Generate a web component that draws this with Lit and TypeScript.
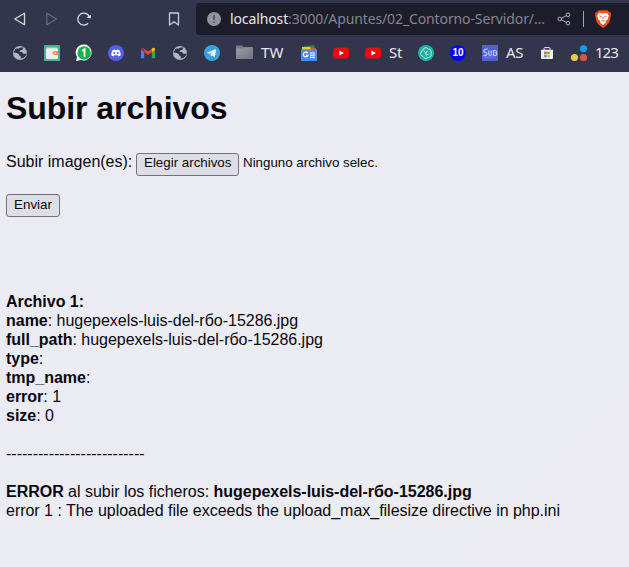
import { LitElement, html, svg, css } from "lit";
import { customElement } from "lit/decorators.js";

const globe = svg`<circle cx="8" cy="8" r="7" fill="#b3b5bf"/><path d="M3.600 3.800 6.600 3.600 8 2.800l3.300-.5-.9 2.400-2.300.8-.4 1.500h2.200l1.500 1.700 2.200.1 1-.6-.6 2.200-2.800 2.600-2.700.6.5-2.200L7 10.200 6.700 8.700 4.300 8.100 1.300 7.600Z" fill="#30334a"/>`;
const youtube = svg`<rect y="2.500" width="16" height="11" rx="3" fill="#f10613"/><path d="m6.300 5.400 4.700 2.600-4.700 2.600Z" fill="#fff"/>`;

const icons: Record<string, unknown> = {
  globe,
  youtube,
  wallet: svg`<rect width="16" height="16" rx="1" fill="#44b78b"/><rect x="2" y="3" width="12" height="11" rx="1.500" fill="#eeecf4"/><path d="M2.500 3h10" stroke="#b8d8d2"/><path d="M14 6h-3.500a2 2 0 0 0 0 4H14Z" fill="#f0974a"/><circle cx="11.200" cy="8" r=".8" fill="#fff"/>`,
  whatsapp: svg`<path d="m0 15.900 1-4A8 8 0 1 1 5 15Z" fill="#f3f6f4"/><circle cx="8.200" cy="7.900" r="6.700" fill="#18b34a"/><path d="m6.200 6 2.300-1.600v7.500" fill="none" stroke="#fff" stroke-width="1.900"/>`,
  discord: svg`<circle cx="8" cy="8" r="8" fill="#5460e6"/><path d="M4.700 5.100 6.700 4.400l.5.800h1.600l.5-.8 2 .7 1.400 3.100v2.100l-2.200 1.100-.8-1.100H6.300l-.8 1.100-2.200-1.100V8.200Z" fill="#fff"/><circle cx="6.300" cy="8.100" r="1" fill="#5460e6"/><circle cx="9.700" cy="8.100" r="1" fill="#5460e6"/>`,
  gmail: svg`<path d="M1 4.500 4.200 6.900V13.300H2a1 1 0 0 1-1-1Z" fill="#4385ee"/><path d="m15 4.500-3.200 2.400v6.400H14a1 1 0 0 0 1-1Z" fill="#33a854"/><path d="M4.200 3.700 8 6.600l3.800-2.900v3.500L8 10.100 4.200 7.200Z" fill="#ea4335"/><path d="M1 4.100c0-1.400 1.500-1.800 2.500-1l.7.600v3.500L1 4.900Z" fill="#c8252f"/><path d="M15 4.100c0-1.400-1.500-1.800-2.500-1l-.7.600v3.500L15 4.900Z" fill="#fbbc04"/>`,
  telegram: svg`<circle cx="8" cy="8" r="8" fill="#36a3dd"/><path d="m2.900 7.800 9.300-3.700-1.400 8.100-2.600-1.900-1.300 1.300-.3-2.400 3.300-3-4.300 2.500Z" fill="#fff"/>`,
  news: svg`<path d="M1.500 1.500 13 0l1 4H2Z" fill="#238843"/><path d="m6 1.200 9 1.800v3H3Z" fill="#ed4934"/><path d="M1 2h8l1 3H1Z" fill="#fac323"/><rect y="4.200" width="16" height="11.800" rx=".8" fill="#4e89eb"/><path d="M6.700 8.100A2.400 2.400 0 1 0 7 10.300H5M9 8h5M9 10.200h5M9 12.400h5" fill="none" stroke="#fff" stroke-width="1.200"/>`,
  chatgpt: svg`<circle cx="8" cy="8" r="8" fill="#18b3a2"/><path d="M4.800 5a3 3 0 0 1 5.400-.9 2.700 2.700 0 0 1 2.700 4 2.900 2.900 0 0 1-3 4.400 3 3 0 0 1-4.900-1 2.800 2.800 0 0 1-2-4.200A2.700 2.700 0 0 1 4.800 5Zm.7.800 2 1.700 2.300-1.300M8 10.200v-2.500m0 2.500 2.500-1" fill="none" stroke="#d8f5ef" stroke-width=".9"/>`,
  ten: svg`<circle cx="8" cy="8" r="8" fill="#0508ef"/><text class="ten" x="8" y="11.200" text-anchor="middle">10</text>`,
  sub: svg`<rect width="16" height="16" fill="#5261d2"/><path d="M5.500 4.200C1.800 3.400.5 6.800 3.200 7.400c3 .7 2 3.600-1.900 3.200M6.800 5.600v3.700c0 1.600 2.500 1.600 2.500 0V5.600M11.500 5.500v5h1.300c2.800 0 2.500-2.600.4-2.600 1.800 0 1.700-2.400-.2-2.400Z" fill="none" stroke="#c2c8f4" stroke-width="1.200"/><path d="M2.500 12.200h11" stroke="#7f8be3" stroke-width=".7"/>`,
  store: svg`<path d="M5 5V3.500C5 2.900 5.400 2.600 6 2.600h4c.6 0 1 .3 1 .9V5" fill="none" stroke="#e9e9ee" stroke-width="1"/><path d="M2 4.700h12V13a1 1 0 0 1-1 1H3a1 1 0 0 1-1-1Z" fill="#eeeef0"/><path d="M5.200 6.700h2.500v2.500H5.200Z" fill="#ec512b"/><path d="M8.300 6.700h2.500v2.500H8.300Z" fill="#73ad16"/><path d="M5.200 9.800h2.500v2.500H5.200Z" fill="#1ba4e7"/><path d="M8.300 9.800h2.500v2.500H8.300Z" fill="#f4b613"/>`,
  dots: svg`<circle cx="12.500" cy="3.700" r="3.600" fill="#0b9be8"/><circle cx="3.500" cy="12.500" r="3.600" fill="#edca45"/><circle cx="12.500" cy="12.500" r="3.600" fill="#e75431"/>`,
  folder: svg`<defs><linearGradient id="fold" x2="1" y2="1"><stop stop-color="#9c9ba8"/><stop offset="1" stop-color="#737280"/></linearGradient></defs><path d="M0 1.500q0-1 1-1h5l1.500 1.500h8.500q1 0 1 1V13q0 1-1 1H1q-1 0-1-1Z" fill="#7b7a87"/><path d="M0 3.500h7l1.500-1H17V13q0 1-1 1H1q-1 0-1-1Z" fill="url(#fold)"/>`,
  back: svg`<path d="M12.500 2.300v11.400L2.800 8Z" fill="none" stroke="#d7d8df" stroke-width="1.300" stroke-linejoin="round"/>`,
  forward: svg`<path d="M2.800 2.300v11.400L12.500 8Z" fill="none" stroke="#686b7d" stroke-width="1.300" stroke-linejoin="round"/>`,
  reload: svg`<path d="M12.200 12.200A6 6 0 1 1 13.300 5.500" fill="none" stroke="#e0e1e7" stroke-width="1.300"/><path d="m10.300 6.600 4.400 1 .3-3.700-1.800.9Z" fill="#e0e1e7"/>`,
  mark: svg`<path d="M3.500 2h9v12L8 10.700 3.500 14Z" fill="none" stroke="#c9cad3" stroke-width="1.300" stroke-linejoin="round"/>`,
  info: svg`<circle cx="8" cy="8" r="7" fill="#9394a0"/><path d="M8 4v5M8 10.400v1.600" stroke="#4e4e5b" stroke-width="1.600"/>`,
  share: svg`<path d="m4 8 7.500-4M4 8l7.500 4" stroke="#b6b7c2"/><g fill="#1d1c2b" stroke="#b6b7c2"><circle cx="3.700" cy="8" r="1.800"/><circle cx="12" cy="3.800" r="1.800"/><circle cx="12" cy="12.200" r="1.800"/></g>`,
  brave: svg`<path d="m3.500.2 9 0 1.500 1.700 1.700.5.2 3-1.500 6.500-2.400 3.100L8 18l-4-3L1.600 11.900.1 5.400l.2-3L2 1.900Z" fill="#f0511f"/><path d="M4.200 2.800 8 3.400l3.800-.6 2 3-1.300 3.800-1.900 1.300.2 1.500L8 14.900l-2.800-2.500.2-1.500-1.900-1.300-1.300-3.800Z" fill="#fff"/><path d="m4.300 6 2.300.7M11.700 6l-2.300.7M8 7v2.300M6.400 10.500 8 11.200l1.600-.7" stroke="#f0511f" fill="none" stroke-width=".9"/>`,
};

const glyph = (name: string, w = 16, h = 16) =>
  html`<svg width=${w} height=${h} viewBox="0 0 ${w} ${h}">${icons[name]}</svg>`;

const bookmarks: [string, string?, string?][] = [
  ["globe"], ["wallet"], ["whatsapp"], ["discord"], ["gmail"], ["globe"], ["telegram"],
  ["folder", "TW", "tw"], ["news"], ["youtube"], ["youtube", "St", "st"], ["chatgpt"],
  ["ten"], ["sub", "AS", "as"], ["store"], ["dots", "123", "num"],
];

@customElement("browser-bar")
class BrowserBar extends LitElement {
  static styles = css`
    :host { display: block; height: 72px; overflow: hidden; background: #32354b; color: #e6e7ee; font-family: "Noto Sans", sans-serif; }
    svg { display: block; flex: none; overflow: visible; }
    .nav { height: 38px; display: flex; align-items: center; padding-left: 12px; box-sizing: border-box; white-space: nowrap; }
    .buttons { display: flex; flex: none; gap: 16px; width: 154px; }
    .address { margin-left: 14px; height: 32px; flex: none; width: 440px; box-sizing: border-box; border-radius: 4px; background: #1d1c2b; display: flex; align-items: center; padding-left: 10px; }
    .url { width: 326px; flex: none; margin-left: 8px; font-size: 14px; line-height: 20px; letter-spacing: -0.12px; color: #858490; }
    .host { color: #e8e8ef; }
    .divider { width: 1px; height: 16px; background: #a4a4b0; margin: 0 11px; }
    .marks { display: flex; gap: 16px; height: 30px; align-items: center; padding-left: 12px; }
    .item { display: flex; align-items: center; flex: none; gap: 8px; height: 16px; }
    .label { font-size: 15px; line-height: 20px; margin-top: -2px; white-space: nowrap; }
    .tw { width: 24px; letter-spacing: 0.2px; }
    .st { width: 13px; letter-spacing: -0.3px; }
    .as { width: 17px; letter-spacing: -0.3px; }
    .num { width: 24px; letter-spacing: -1px; }
    .ten { font: bold 10px "Liberation Sans", sans-serif; fill: #fff; }
  `;
  render() {
    return html`
      <div class="nav">
        <div class="buttons">${glyph("back")}${glyph("forward")}${glyph("reload")}</div>
        ${glyph("mark")}
        <div class="address">
          ${glyph("info")}
          <span class="url"><span class="host">localhost</span>:3000/Apuntes/02_Contorno-Servidor/…</span>
          ${glyph("share")}<span class="divider"></span>${glyph("brave", 16, 18)}
        </div>
      </div>
      <div class="marks">
        ${bookmarks.map(([icon, label, cls]) => html`<div class="item">${glyph(icon, icon === "folder" ? 17 : 16)}${label ? html`<span class="label ${cls}">${label}</span>` : ""}</div>`)}
      </div>`;
  }
}

@customElement("app-root")
class AppRoot extends LitElement {
  static styles = css`
    :host { display: block; height: 567px; overflow: hidden; background: linear-gradient(135deg, #ebebf4, #ececf2); color: #08080e; font: 16px/19px "Liberation Sans", sans-serif; }
    main { padding: 0 6px; white-space: nowrap; }
    h1 { margin: 0; padding-top: 17px; font-size: 32px; line-height: 38px; letter-spacing: -0.06px; }
    .file { margin-top: 25px; height: 24px; display: flex; }
    .caption { width: 130px; }
    .button { box-sizing: border-box; height: 23px; border: 1px solid #72727d; border-radius: 3px; background: #dedfe6; font: 13.333px/17px "Liberation Sans", sans-serif; color: #08080e; padding: 0 7px 3px; text-align: center; }
    .choose { width: 103px; margin-top: 1px; padding-bottom: 4px; }
    .none { font-size: 13.333px; margin: 1px 0 0 4px; }
    .send { width: 54px; display: block; margin-top: 18px; }
    .result { margin-top: 75px; }
    .result, .error { letter-spacing: -0.02px; }
    .rule, .error { margin-top: 19px; }
  `;
  render() {
    const fields = [
      ["name", " hugepexels-luis-del-rбo-15286.jpg"],
      ["full_path", " hugepexels-luis-del-rбo-15286.jpg"],
      ["type", ""], ["tmp_name", ""], ["error", " 1"], ["size", " 0"],
    ];
    return html`
      <browser-bar></browser-bar>
      <main>
        <h1>Subir archivos</h1>
        <div class="file"><span class="caption">Subir imagen(es):</span><button class="button choose">Elegir archivos</button><span class="none">Ninguno archivo selec.</span></div>
        <button class="button send">Enviar</button>
        <div class="result">
          <div><b>Archivo 1:</b></div>
          ${fields.map(([key, value]) => html`<div><b>${key}</b>:${value}</div>`)}
        </div>
        <div class="rule">--------------------------</div>
        <div class="error">
          <div><b>ERROR</b> al subir los ficheros: <b>hugepexels-luis-del-rбo-15286.jpg</b></div>
          <div>error 1 : The uploaded file exceeds the upload_max_filesize directive in php.ini</div>
        </div>
      </main>`;
  }
}
